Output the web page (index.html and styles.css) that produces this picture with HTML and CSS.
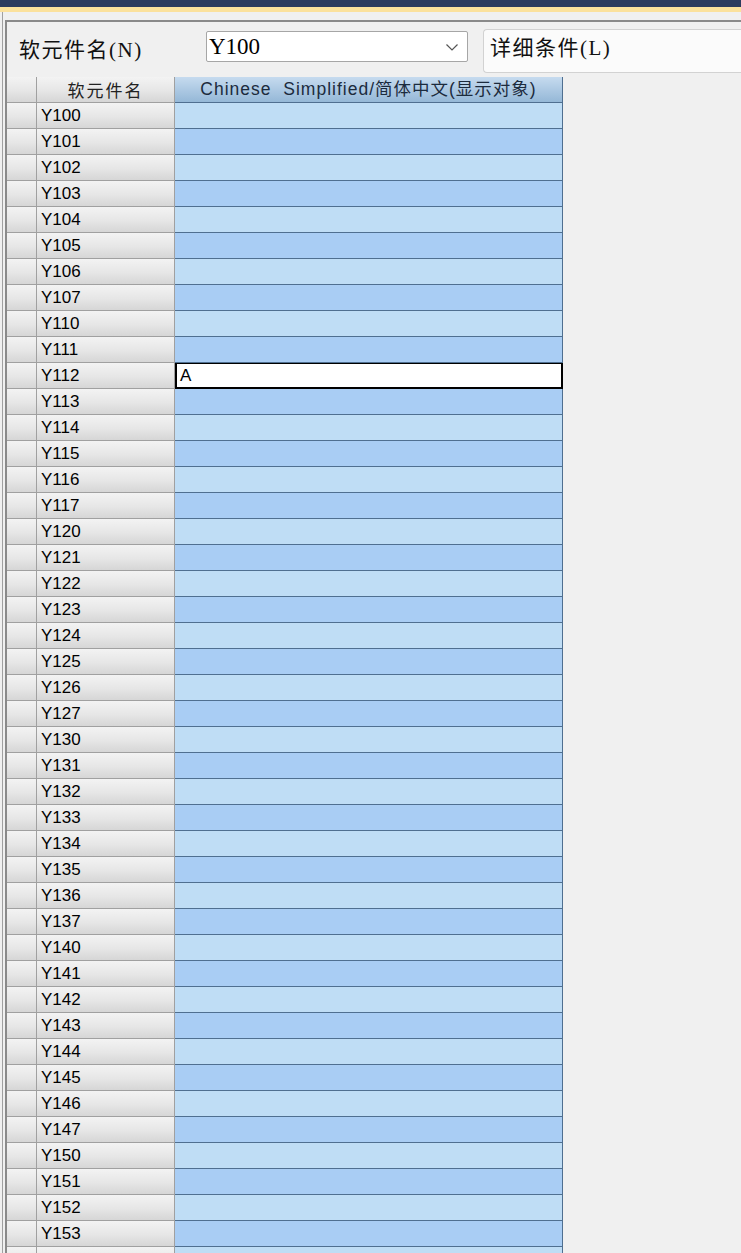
FILE: index.html
```html
<!DOCTYPE html>
<html lang="zh">
<head>
<meta charset="utf-8">
<link rel="stylesheet" href="styles.css">
</head>
<body>
<div class="titlebar"></div>
<div class="yellowbar"></div>
<div class="outer">
  <div class="strip"></div>
  <div class="inner">
    <div class="toolbar">
      <div class="label">软元件名(N)</div>
      <div class="combo">
        <span class="combo-text">Y100</span>
        <svg class="chev" width="12" height="7" viewBox="0 0 12 7"><path d="M0.5 0.5 L6 6 L11.5 0.5" fill="none" stroke="#555" stroke-width="1.2"/></svg>
      </div>
      <div class="details">详细条件(L)</div>
    </div>
    <div class="grid">
      <div class="row head">
        <div class="rh"></div>
        <div class="name hname">软元件名</div>
        <div class="val hval">Chinese  Simplified/简体中文(显示对象)</div>
      </div>
      <div class="row"><div class="rh"></div><div class="name">Y100</div><div class="val"></div></div>
      <div class="row odd"><div class="rh"></div><div class="name">Y101</div><div class="val"></div></div>
      <div class="row"><div class="rh"></div><div class="name">Y102</div><div class="val"></div></div>
      <div class="row odd"><div class="rh"></div><div class="name">Y103</div><div class="val"></div></div>
      <div class="row"><div class="rh"></div><div class="name">Y104</div><div class="val"></div></div>
      <div class="row odd"><div class="rh"></div><div class="name">Y105</div><div class="val"></div></div>
      <div class="row"><div class="rh"></div><div class="name">Y106</div><div class="val"></div></div>
      <div class="row odd"><div class="rh"></div><div class="name">Y107</div><div class="val"></div></div>
      <div class="row"><div class="rh"></div><div class="name">Y110</div><div class="val"></div></div>
      <div class="row odd"><div class="rh"></div><div class="name">Y111</div><div class="val"></div></div>
      <div class="row edit"><div class="rh"></div><div class="name">Y112</div><div class="val"><span class="cell-edit">A</span></div></div>
      <div class="row odd"><div class="rh"></div><div class="name">Y113</div><div class="val"></div></div>
      <div class="row"><div class="rh"></div><div class="name">Y114</div><div class="val"></div></div>
      <div class="row odd"><div class="rh"></div><div class="name">Y115</div><div class="val"></div></div>
      <div class="row"><div class="rh"></div><div class="name">Y116</div><div class="val"></div></div>
      <div class="row odd"><div class="rh"></div><div class="name">Y117</div><div class="val"></div></div>
      <div class="row"><div class="rh"></div><div class="name">Y120</div><div class="val"></div></div>
      <div class="row odd"><div class="rh"></div><div class="name">Y121</div><div class="val"></div></div>
      <div class="row"><div class="rh"></div><div class="name">Y122</div><div class="val"></div></div>
      <div class="row odd"><div class="rh"></div><div class="name">Y123</div><div class="val"></div></div>
      <div class="row"><div class="rh"></div><div class="name">Y124</div><div class="val"></div></div>
      <div class="row odd"><div class="rh"></div><div class="name">Y125</div><div class="val"></div></div>
      <div class="row"><div class="rh"></div><div class="name">Y126</div><div class="val"></div></div>
      <div class="row odd"><div class="rh"></div><div class="name">Y127</div><div class="val"></div></div>
      <div class="row"><div class="rh"></div><div class="name">Y130</div><div class="val"></div></div>
      <div class="row odd"><div class="rh"></div><div class="name">Y131</div><div class="val"></div></div>
      <div class="row"><div class="rh"></div><div class="name">Y132</div><div class="val"></div></div>
      <div class="row odd"><div class="rh"></div><div class="name">Y133</div><div class="val"></div></div>
      <div class="row"><div class="rh"></div><div class="name">Y134</div><div class="val"></div></div>
      <div class="row odd"><div class="rh"></div><div class="name">Y135</div><div class="val"></div></div>
      <div class="row"><div class="rh"></div><div class="name">Y136</div><div class="val"></div></div>
      <div class="row odd"><div class="rh"></div><div class="name">Y137</div><div class="val"></div></div>
      <div class="row"><div class="rh"></div><div class="name">Y140</div><div class="val"></div></div>
      <div class="row odd"><div class="rh"></div><div class="name">Y141</div><div class="val"></div></div>
      <div class="row"><div class="rh"></div><div class="name">Y142</div><div class="val"></div></div>
      <div class="row odd"><div class="rh"></div><div class="name">Y143</div><div class="val"></div></div>
      <div class="row"><div class="rh"></div><div class="name">Y144</div><div class="val"></div></div>
      <div class="row odd"><div class="rh"></div><div class="name">Y145</div><div class="val"></div></div>
      <div class="row"><div class="rh"></div><div class="name">Y146</div><div class="val"></div></div>
      <div class="row odd"><div class="rh"></div><div class="name">Y147</div><div class="val"></div></div>
      <div class="row"><div class="rh"></div><div class="name">Y150</div><div class="val"></div></div>
      <div class="row odd"><div class="rh"></div><div class="name">Y151</div><div class="val"></div></div>
      <div class="row"><div class="rh"></div><div class="name">Y152</div><div class="val"></div></div>
      <div class="row odd"><div class="rh"></div><div class="name">Y153</div><div class="val"></div></div>
      <div class="row"><div class="rh"></div><div class="name"></div><div class="val"></div></div>
    </div>
  </div>
</div>
</body>
</html>
```
FILE: styles.css
```css
html, body {
  margin: 0;
  padding: 0;
  background: #f0f0f0;
  overflow: hidden;
}
body {
  width: 741px;
  height: 1253px;
  font-family: "Liberation Sans", Arial, "Noto Sans CJK SC", sans-serif;
}
.titlebar {
  height: 7px;
  background: #2c3b5e;
}
.yellowbar {
  height: 5px;
  background: #fbe19c;
}
.outer {
  margin-left: 2px;
  border-left: 1px solid #a0a0a0;
  padding-left: 2px;
}
.strip {
  height: 8px;
  background: #f0f0f0;
}
.inner {
  border-top: 2px solid #8a8a8a;
  border-left: 2px solid #8a8a8a;
  background: #f0f0f0;
}
.toolbar {
  height: 55px;
  display: flex;
  align-items: flex-start;
}
.label {
  width: 199px;
  flex: none;
  padding-left: 12px;
  box-sizing: border-box;
  margin-top: 15px;
  font-family: "Liberation Serif", "Noto Sans CJK SC", serif;
  font-size: 21px;
  line-height: 26px;
  letter-spacing: 1.5px;
  color: #111;
}
.combo {
  flex: none;
  margin-top: 9px;
  width: 262px;
  height: 31px;
  box-sizing: border-box;
  background: #fff;
  border: 1px solid #a6a6a6;
  border-radius: 2px;
  display: flex;
  align-items: center;
  justify-content: space-between;
  padding: 0 9px 0 2px;
}
.combo-text {
  font-family: "Liberation Serif", serif;
  font-size: 23px;
  line-height: 28px;
  color: #000;
}
.chev {
  display: block;
  margin-top: 1px;
}
.details {
  margin-left: 15px;
  margin-top: 7px;
  flex: 1;
  height: 44px;
  box-sizing: border-box;
  background: #fbfbfb;
  border: 1px solid #d2d2d2;
  border-right: none;
  border-radius: 4px 0 0 4px;
  padding: 5px 0 0 6px;
  font-family: "Liberation Serif", "Noto Sans CJK SC", serif;
  font-size: 21px;
  line-height: 26px;
  letter-spacing: 1.5px;
  color: #111;
}
.grid {
  display: flex;
  flex-direction: column;
}
.row {
  display: flex;
  height: 26px;
}
.rh, .name {
  box-sizing: border-box;
  background: linear-gradient(#f3f3f3, #e6e6e6 55%, #d6d6d6);
  border-right: 1px solid #a0a0a0;
  border-bottom: 1px solid #a0a0a0;
}
.rh {
  width: 30px;
}
.name {
  width: 138px;
  padding-left: 4px;
  padding-top: 1px;
  font-size: 17px;
  line-height: 24px;
  color: #000;
}
.val {
  width: 388px;
  box-sizing: border-box;
  background: #bfddf5;
  border-right: 1px solid #4f6f90;
  border-bottom: 1px solid #4f6f90;
}
.row.odd .val {
  background: #a9cdf4;
}
.row.head {
  height: 26px;
}
.hname {
  text-align: center;
  padding-left: 0;
  padding-top: 0;
  font-family: "Noto Sans CJK SC", sans-serif;
  font-size: 17px;
  letter-spacing: 2px;
  line-height: 25px;
  color: #222;
}
.hval {
  background: linear-gradient(#c6dbef, #adc9e3 50%, #95b8d7);
  text-align: center;
  white-space: pre;
  font-size: 17.5px;
  letter-spacing: 1px;
  line-height: 25px;
  color: #1c2b3d;
}
.row.edit .val {
  background: #fff;
  border: 2px solid #000;
  border-top-width: 1px;
  padding-left: 3px;
}
.cell-edit {
  font-size: 17px;
  line-height: 23px;
  color: #000;
}
```
